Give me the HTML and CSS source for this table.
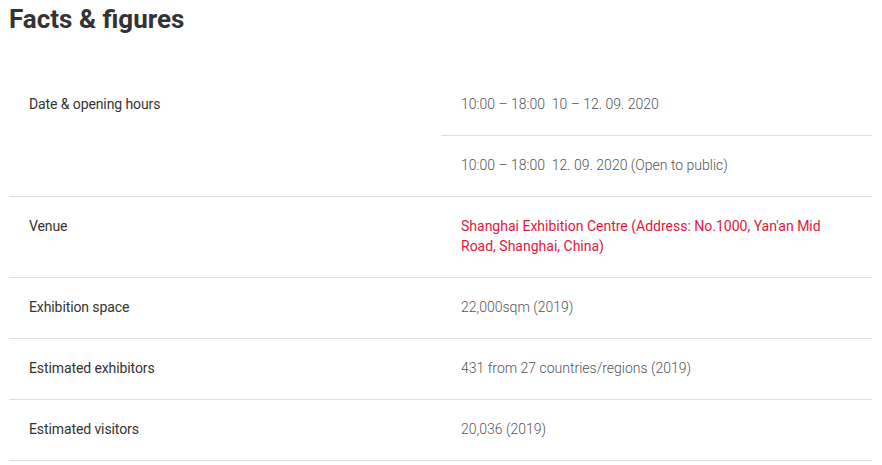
FILE: index.html
```html
<!DOCTYPE html>
<html>
<head>
<meta charset="utf-8">
<link rel="stylesheet" href="styles.css">
</head>
<body>
<div class="page">
  <h2 class="title">Facts &amp; figures</h2>
  <div class="facts">
    <div class="row">
      <div class="label">Date &amp; opening hours</div>
      <div class="values">
        <div class="value">10:00 – 18:00&nbsp; 10 – 12. 09. 2020</div>
        <div class="value">10:00 – 18:00&nbsp; 12. 09. 2020 (Open to public)</div>
      </div>
    </div>
    <div class="row">
      <div class="label">Venue</div>
      <div class="values">
        <div class="value link">Shanghai Exhibition Centre (Address: No.1000, Yan'an Mid Road, Shanghai, China)</div>
      </div>
    </div>
    <div class="row">
      <div class="label">Exhibition space</div>
      <div class="values"><div class="value">22,000sqm (2019)</div></div>
    </div>
    <div class="row">
      <div class="label">Estimated exhibitors</div>
      <div class="values"><div class="value">431 from 27 countries/regions (2019)</div></div>
    </div>
    <div class="row">
      <div class="label">Estimated visitors</div>
      <div class="values"><div class="value">20,036 (2019)</div></div>
    </div>
  </div>
</div>
</body>
</html>
```
FILE: styles.css
```css
html, body {
  margin: 0;
  padding: 0;
  background: #fff;
}
.page {
  padding: 4px 10px 0 9px;
  font-family: Roboto, "Liberation Sans", sans-serif;
}
.title {
  margin: 0;
  font-size: 26px;
  line-height: 31px;
  font-weight: 700;
  color: #333;
}
.facts {
  margin-top: 40px;
}
.row {
  display: grid;
  grid-template-columns: 432px 1fr;
  border-bottom: 1px solid #ddd;
}
.label {
  padding: 19px 20px 21px;
  font-size: 14px;
  line-height: 20px;
  color: #333;
  letter-spacing: -0.1px;
}
.values {
  display: flex;
  flex-direction: column;
}
.value {
  padding: 19px 30px 21px 20px;
  font-size: 14px;
  line-height: 20px;
  font-weight: 300;
  color: #555;
}
.value + .value {
  border-top: 1px solid #ddd;
}
.value.link {
  color: #e3173e;
  font-weight: 400;
}
```
